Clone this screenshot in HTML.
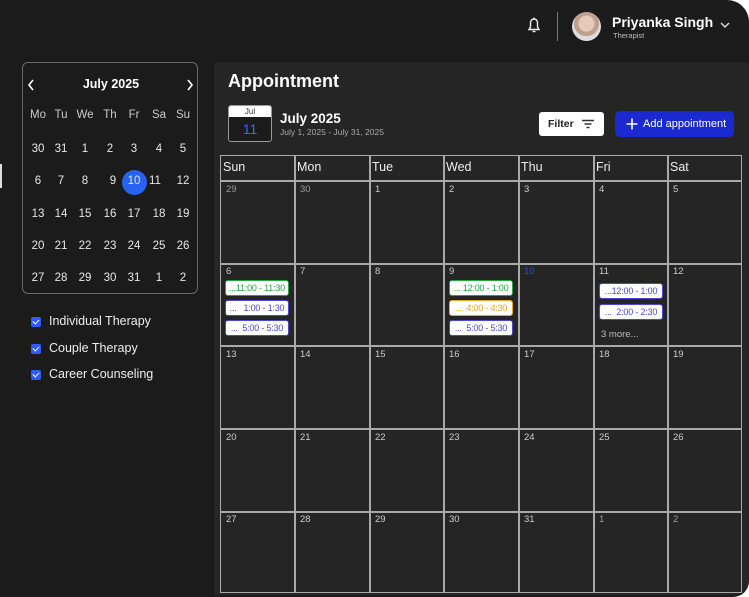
<!DOCTYPE html>
<html><head><meta charset="utf-8"><style>
*{margin:0;padding:0;box-sizing:border-box}
body{width:749px;height:597px;background:#fff;font-family:"Liberation Sans",sans-serif;overflow:hidden;position:relative}
.frame{position:absolute;left:0;top:0;width:749px;height:597px;background:#1c1b1c;border-radius:0 22px 16px 0}
.a{position:absolute}
.panel{position:absolute;left:214px;top:62px;width:535px;height:533px;background:#262526;border-radius:4px 4px 16px 0}
.mini{position:absolute;left:22px;top:62px;width:176px;height:232px;border:1px solid #6a6a6a;border-radius:6px}
.cb{position:absolute;left:31px;width:10px;height:10px;background:#2d5bff;border-radius:2px}
.cb:after{content:"";position:absolute;left:3px;top:1px;width:3px;height:5px;border:solid #fff;border-width:0 1.5px 1.5px 0;transform:rotate(45deg)}
.lbl{position:absolute;left:49px;font-size:12.5px;color:#eee}
.grid{position:absolute;left:220px;top:155px;width:522px;height:438px;border:1.5px solid #a9a9a9}
.vl{position:absolute;top:0;bottom:0;width:1.5px;background:#a9a9a9}
.hl{position:absolute;left:0;right:0;height:1.5px;background:#a9a9a9}
.hd{position:absolute;top:4px;font-size:12.5px;color:#eee}
.n{position:absolute;font-size:9.5px;color:#bbb}
.ch{position:absolute;width:64px;height:16px;background:#fff;border-radius:3px;font-size:9px;letter-spacing:-0.2px;text-align:center;line-height:14px;border:1.5px solid;white-space:nowrap;overflow:hidden}
.g{color:#22a83a;border-color:#22a83a}.b{color:#4a48d6;border-color:#4a48d6}.o{color:#f2a41a;border-color:#f2a41a}
</style></head><body>
<div class="frame"></div>
<svg class="a" style="left:527px;top:17px" width="14" height="17" viewBox="0 0 14 17"><path d="M7 2C4.5 2 3.5 4 3.5 6v4L2 12.5h10L10.5 10V6C10.5 4 9.5 2 7 2z" fill="none" stroke="#eee" stroke-width="1.4"/><path d="M5.5 14.5h3" stroke="#eee" stroke-width="1.4"/><path d="M7 0.5v1.5" stroke="#eee" stroke-width="1.2"/></svg>
<div class="a" style="left:557px;top:12px;width:1px;height:29px;background:#777"></div>
<div class="a" style="left:572px;top:12px;width:29px;height:29px;border-radius:50%;background:radial-gradient(circle at 50% 40%,#e8c8b8 0 35%,#bfa090 36% 55%,#ddd 56%);"></div>
<div class="a" style="left:612px;top:14px;font-size:14px;font-weight:bold;color:#fff">Priyanka Singh</div>
<div class="a" style="left:613px;top:31px;font-size:7.5px;color:#bbb">Therapist</div>
<svg class="a" style="left:720px;top:22px" width="10" height="7"><path d="M1 1l4 4 4-4" fill="none" stroke="#ddd" stroke-width="1.4"/></svg>
<div class="a" style="left:0;top:164px;width:2px;height:24px;background:#ddd"></div>
<div class="mini">
<svg class="a" style="left:4px;top:16px" width="8" height="12"><path d="M6 1L2 6l4 5" fill="none" stroke="#fff" stroke-width="1.6"/></svg>
<div class="a" style="left:0;width:176px;top:14px;text-align:center;font-size:12.5px;font-weight:bold;color:#fff">July 2025</div>
<svg class="a" style="left:163px;top:16px" width="8" height="12"><path d="M2 1l4 5-4 5" fill="none" stroke="#fff" stroke-width="1.6"/></svg>
</div>
<div id="mc"></div>
<div class="a" style="left:122px;top:170px;width:25px;height:25px;border-radius:50%;background:#2563f0"></div>
<script>
(function(){
var xs=[38,61,85,110,134,159,183],rows=[["Mo","Tu","We","Th","Fr","Sa","Su"],[30,31,1,2,3,4,5],[6,7,8,9,10,11,12],[13,14,15,16,17,18,19],[20,21,22,23,24,25,26],[27,28,29,30,31,1,2]],ys=[109,143,175,208,240,272],h="";
rows.forEach(function(r,i){r.forEach(function(v,j){var x=xs[j];if(i==2&&j==3)x=113;if(i==2&&j==5)x=155;h+='<div class="a" style="z-index:2;left:'+(x-12)+'px;top:'+ys[i]+'px;width:24px;text-align:center;font-size:11.5px;color:'+(i==0?'#ccc':'#e8e8e8')+'">'+v+'</div>';});});
document.getElementById('mc').outerHTML=h;
})();
</script>
<div class="cb" style="top:317px"></div><div class="lbl" style="top:314px">Individual Therapy</div>
<div class="cb" style="top:344px"></div><div class="lbl" style="top:341px">Couple Therapy</div>
<div class="cb" style="top:370px"></div><div class="lbl" style="top:367px">Career Counseling</div>
<div class="panel"></div>
<div class="a" style="left:228px;top:71px;font-size:18px;font-weight:bold;color:#fff">Appointment</div>
<div class="a" style="left:228px;top:105px;width:44px;height:37px;border:1px solid #999;border-radius:3px;background:#1c1b1c;overflow:hidden">
<div style="height:11px;background:#fff;color:#333;font-size:8px;text-align:center;line-height:11px">Jul</div>
<div style="color:#2d6bff;font-size:14px;text-align:center;line-height:24px">11</div></div>
<div class="a" style="left:280px;top:111px;font-size:13.5px;font-weight:bold;color:#fff">July 2025</div>
<div class="a" style="left:280px;top:127px;font-size:8.5px;color:#aaa">July 1, 2025 - July 31, 2025</div>
<div class="a" style="left:539px;top:112px;width:65px;height:24px;background:#fff;border-radius:3px;font-size:10.5px;font-weight:bold;color:#222;line-height:24px;padding-left:9px">Filter
<svg style="position:absolute;left:42px;top:7px" width="14" height="10"><path d="M1 1.5h12M3.5 5h7M5.5 8.5h3" stroke="#333" stroke-width="1.5"/></svg></div>
<div class="a" style="left:615px;top:111px;width:119px;height:26px;background:#1a2ad0;border-radius:5px;font-size:11px;color:#fff;line-height:26px;padding-left:28px">Add appointment
<svg style="position:absolute;left:11px;top:7px" width="12" height="12"><path d="M6 0.5v11M0.5 6h11" stroke="#fff" stroke-width="1.6"/></svg></div>
<div class="grid">
<div class="vl" style="left:73px"></div><div class="vl" style="left:148px"></div><div class="vl" style="left:222px"></div><div class="vl" style="left:297px"></div><div class="vl" style="left:372px"></div><div class="vl" style="left:446px"></div>
<div class="hl" style="top:24px"></div><div class="hl" style="top:107px"></div><div class="hl" style="top:189px"></div><div class="hl" style="top:272px"></div><div class="hl" style="top:355px"></div>
</div>
<div id="gc"></div>
<script>
(function(){
var cx=[220,294,369,443,518,593,667],h="",hd=["Sun","Mon","Tue","Wed","Thu","Fri","Sat"];
hd.forEach(function(t,i){h+='<div class="hd" style="left:'+(cx[i]+3)+'px;top:160px">'+t+'</div>';});
var ry=[184,266,349,432,514],d=[[29,30,1,2,3,4,5],[6,7,8,9,10,11,12],[13,14,15,16,17,18,19],[20,21,22,23,24,25,26],[27,28,29,30,31,1,2]];
d.forEach(function(r,i){r.forEach(function(v,j){var c=(i==1&&j==4)?'#2a4ad8':((i==0&&j<2)||(i==4&&j>4))?'#999':'#ccc';h+='<div class="n" style="left:'+(cx[j]+6)+'px;top:'+ry[i]+'px;color:'+c+'">'+v+'</div>';});});
document.getElementById('gc').outerHTML=h;
})();
</script>
<div class="ch g" style="left:225px;top:280px">...11:00 - 11:30</div>
<div class="ch b" style="left:225px;top:300px">...&nbsp;&nbsp; 1:00 - 1:30</div>
<div class="ch b" style="left:225px;top:320px">...&nbsp; 5:00 - 5:30</div>
<div class="ch g" style="left:449px;top:280px">... 12:00 - 1:00</div>
<div class="ch o" style="left:449px;top:300px">...&nbsp; 4:00 - 4:30</div>
<div class="ch b" style="left:449px;top:320px">...&nbsp; 5:00 - 5:30</div>
<div class="ch b" style="left:599px;top:283px">...12:00 - 1:00</div>
<div class="ch b" style="left:599px;top:304px">...&nbsp; 2:00 - 2:30</div>
<div class="a" style="left:601px;top:329px;font-size:9.5px;color:#bbb">3 more...</div>
</body></html>
